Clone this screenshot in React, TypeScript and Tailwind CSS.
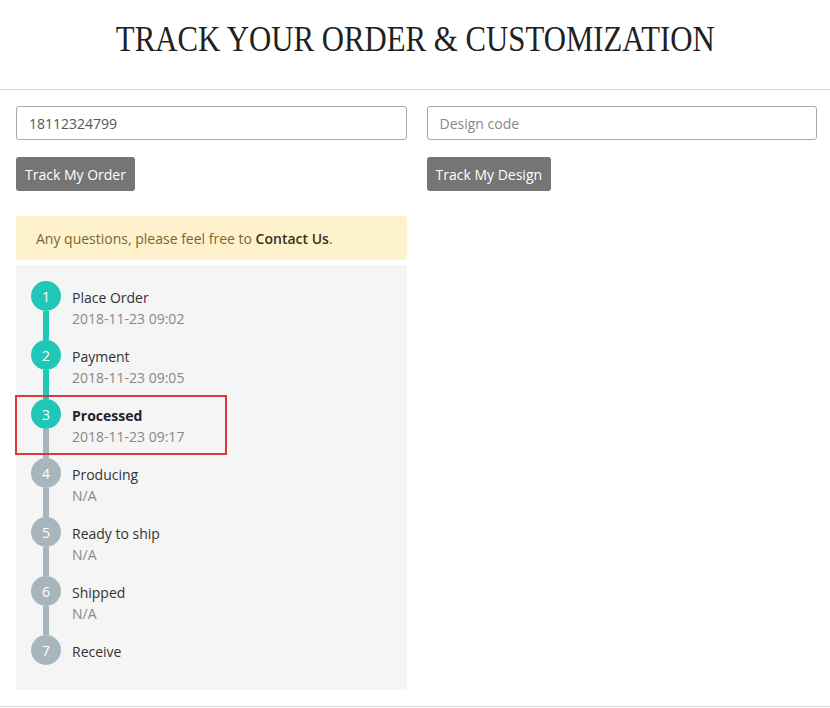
import React from "react"

type Step = { n: number; title: string; date: string | null; done: boolean }

const steps: Step[] = [
  { n: 1, title: "Place Order", date: "2018-11-23 09:02", done: true },
  { n: 2, title: "Payment", date: "2018-11-23 09:05", done: true },
  { n: 3, title: "Processed", date: "2018-11-23 09:17", done: true },
  { n: 4, title: "Producing", date: "N/A", done: false },
  { n: 5, title: "Ready to ship", date: "N/A", done: false },
  { n: 6, title: "Shipped", date: "N/A", done: false },
  { n: 7, title: "Receive", date: null, done: false },
]

const CURRENT = 3

export default function App() {
  return (
    <div className="min-h-[708px] bg-white font-['Open_Sans',sans-serif] text-[14px] text-[#333]">
      <header className="h-[90px] border-b border-[#dcdcdc] flex items-center justify-center">
        <h1 className="font-['Liberation_Serif',serif] text-[35px] text-[#231f20] mt-[-8px] scale-x-[0.88]">
          TRACK YOUR ORDER &amp; CUSTOMIZATION
        </h1>
      </header>

      <main className="grid grid-cols-2 gap-5 pl-4 pr-[13px] pt-4 pb-4 border-b border-[#dcdcdc]">
        <div className="flex flex-col">
          <input
            defaultValue="18112324799"
            className="h-[34px] rounded-[3px] border border-[#a9a9a9] px-3 text-[14px] text-[#555] outline-none"
          />
          <div className="mt-[17px]">
            <button className="h-[34px] rounded-[3px] bg-[#757575] px-[9px] text-[14px] text-white">
              Track My Order
            </button>
          </div>

          <div className="mt-[25px] h-[44px] rounded-[3px] bg-[#fdf2cc] px-5 flex items-center text-[#7d6530]">
            <span>
              Any questions, please feel free to <b className="font-semibold text-[#3a3020]">Contact Us</b>.
            </span>
          </div>

          <div className="relative mt-[5px] bg-[#f5f5f5] pt-4 pb-[25px] pl-[15px]">
            {steps.map((s, i) => {
              const color = s.done ? "bg-[#1ec7b6]" : "bg-[#a8b5bd]"
              const lineColor = steps[i + 1]?.done ? "bg-[#1ec7b6]" : "bg-[#a8b5bd]"
              const last = i === steps.length - 1
              return (
                <div key={s.n} className="flex">
                  <div className="flex flex-col items-center w-[30px]">
                    <div className={`w-[30px] h-[30px] rounded-full ${color} text-white flex items-center justify-center text-[14px]`}>
                      {s.n}
                    </div>
                    {!last && <div className={`w-[6px] h-[29px] ${lineColor}`} />}
                  </div>
                  <div className="ml-[11px] pt-[7px] leading-[20px]">
                    <div className={s.n === CURRENT ? "font-bold text-[#222]" : "text-[#333]"}>{s.title}</div>
                    {s.date && <div className="text-[#888] mt-[1px]">{s.date}</div>}
                  </div>
                </div>
              )
            })}
            {/* highlight around current step */}
            <div className="absolute left-[-1px] top-[130px] w-[212px] h-[60px] border-2 border-[#d8393b]" />
          </div>
        </div>

        <div className="flex flex-col">
          <input
            placeholder="Design code"
            className="h-[34px] rounded-[3px] border border-[#a9a9a9] px-3 text-[14px] text-[#555] placeholder:text-[#888] outline-none"
          />
          <div className="mt-[17px]">
            <button className="h-[34px] rounded-[3px] bg-[#757575] px-[9px] text-[14px] text-white">
              Track My Design
            </button>
          </div>
        </div>
      </main>
    </div>
  )
}
